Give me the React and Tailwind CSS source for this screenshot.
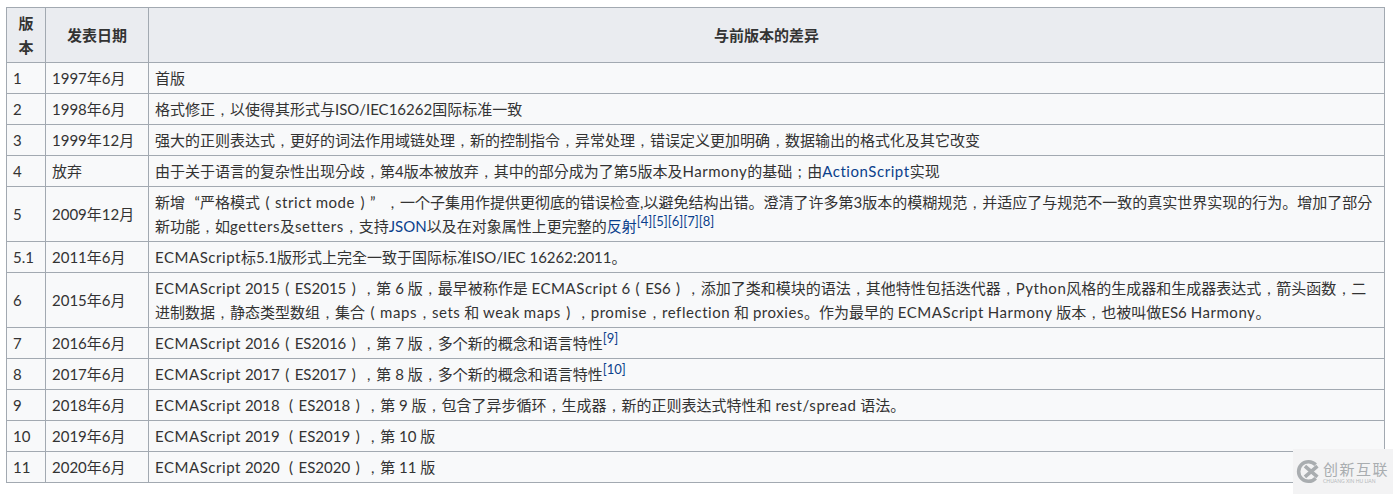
function F({ t }) {
  const parts = t.split(/([（），；“”]|[A-Za-z]*[a-z][A-Za-z]*)/);
  return parts.map((p, i) => {
    if (p === "（") return <span key={i} className="inline-block w-[15px] text-center">(</span>;
    if (p === "）") return <span key={i} className="inline-block w-[15px] text-center">)</span>;
    if (p === "，") return <span key={i} className="inline-block w-[15px] text-center">,</span>;
    if (p === "；") return <span key={i} className="inline-block w-[15px] text-center">;</span>;
    if (p === "“") return <span key={i} className="inline-block w-[15px] text-right">“</span>;
    if (p === "”") return <span key={i} className="inline-block w-[15px] text-left">”</span>;
    if (/[a-z]/.test(p)) return <span key={i} className="tracking-[0.55px]">{p}</span>;
    return p;
  });
}
function Sup({ children }) {
  return <sup className="top-[-6px] align-baseline text-[13px] leading-none text-[#0b3f8c]">{children}</sup>;
}
function A({ children }) {
  return <span className="text-[#0b3f8c]">{children}</span>;
}
const rows = [
  ["1", "1997年6月", "首版"],
  ["2", "1998年6月", <F t="格式修正，以使得其形式与ISO/IEC16262国际标准一致" />],
  ["3", "1999年12月", <F t="强大的正则表达式，更好的词法作用域链处理，新的控制指令，异常处理，错误定义更加明确，数据输出的格式化及其它改变" />],
  ["4", "放弃", <><F t="由于关于语言的复杂性出现分歧，第4版本被放弃，其中的部分成为了第5版本及Harmony的基础；由" /><span className="tracking-[0.55px] text-[#0b3f8c]">ActionScript</span>实现</>],
  ["5", "2009年12月", <><F t="新增“严格模式（strict mode）”，一个子集用作提供更彻底的错误检查,以避免结构出错。澄清了许多第3版本的模糊规范，并适应了与规范不一致的真实世界实现的行为。增加了部分新功能，如getters及setters，支持" /><A>JSON</A>以及在对象属性上更完整的<A>反射</A><Sup>[4][5][6][7][8]</Sup></>],
  ["5.1", "2011年6月", <F t="ECMAScript标5.1版形式上完全一致于国际标准ISO/IEC 16262:2011。" />],
  ["6", "2015年6月", <F t="ECMAScript 2015（ES2015），第 6 版，最早被称作是 ECMAScript 6（ES6），添加了类和模块的语法，其他特性包括迭代器，Python风格的生成器和生成器表达式，箭头函数，二进制数据，静态类型数组，集合（maps，sets 和 weak maps），promise，reflection 和 proxies。作为最早的 ECMAScript Harmony 版本，也被叫做ES6 Harmony。" />],
  ["7", "2016年6月", <><F t="ECMAScript 2016（ES2016），第 7 版，多个新的概念和语言特性" /><Sup>[9]</Sup></>],
  ["8", "2017年6月", <><F t="ECMAScript 2017（ES2017），第 8 版，多个新的概念和语言特性" /><Sup>[10]</Sup></>],
  ["9", "2018年6月", <F t="ECMAScript 2018 （ES2018），第 9 版，包含了异步循环，生成器，新的正则表达式特性和 rest/spread 语法。" />],
  ["10", "2019年6月", <F t="ECMAScript 2019 （ES2019），第 10 版" />],
  ["11", "2020年6月", <F t="ECMAScript 2020 （ES2020），第 11 版" />],
];
const td = "border border-[#a2a9b1] px-[6px] py-[3px]";
export default function App() {
  return (
    <div lang="ko" className="relative h-[494px] w-[1393px] overflow-hidden bg-white pl-[6px] pt-[7px] font-['Lato','Noto_Sans_CJK_KR',sans-serif] text-[15px] leading-[24px] text-[#333]">
      <table className="w-[1379px] table-fixed border-collapse bg-[#f8f9fa]">
        <colgroup>
          <col className="w-[39px]" />
          <col className="w-[103px]" />
          <col />
        </colgroup>
        <thead>
          <tr className="bg-[#eaecf0] text-center font-bold">
            <th className={td}>版<br />本</th>
            <th className={td}>发表日期</th>
            <th className={td}>与前版本的差异</th>
          </tr>
        </thead>
        <tbody>
          {rows.map((r) => (
            <tr key={r[0]}>
              <td className={td}>{r[0]}</td>
              <td className={td}>{r[1]}</td>
              <td className={td}>{r[2]}</td>
            </tr>
          ))}
        </tbody>
      </table>
      <div className="absolute bottom-0 right-0 flex h-[45px] w-[100px] items-center gap-[2px] bg-[#f3f3f4] pl-[3px]">
        <svg width="25" height="25" viewBox="0 0 28 28" fill="none" className="shrink-0">
          <path d="M22 6.5A11 11 0 1 0 22 21.5" stroke="#a9adb0" strokeWidth="4" />
          <path d="M10 8l14 12M24 8L10 20" stroke="#a9adb0" strokeWidth="4" />
        </svg>
        <div className="flex flex-col">
          <span className="whitespace-nowrap text-[15px] leading-[18px] tracking-[1.5px] text-[#a9adb0]">创新互联</span>
          <span className="whitespace-nowrap text-[5px] leading-[6px] text-[#b5b8ba]">CHUANG XIN HU LIAN</span>
        </div>
      </div>
    </div>
  );
}
